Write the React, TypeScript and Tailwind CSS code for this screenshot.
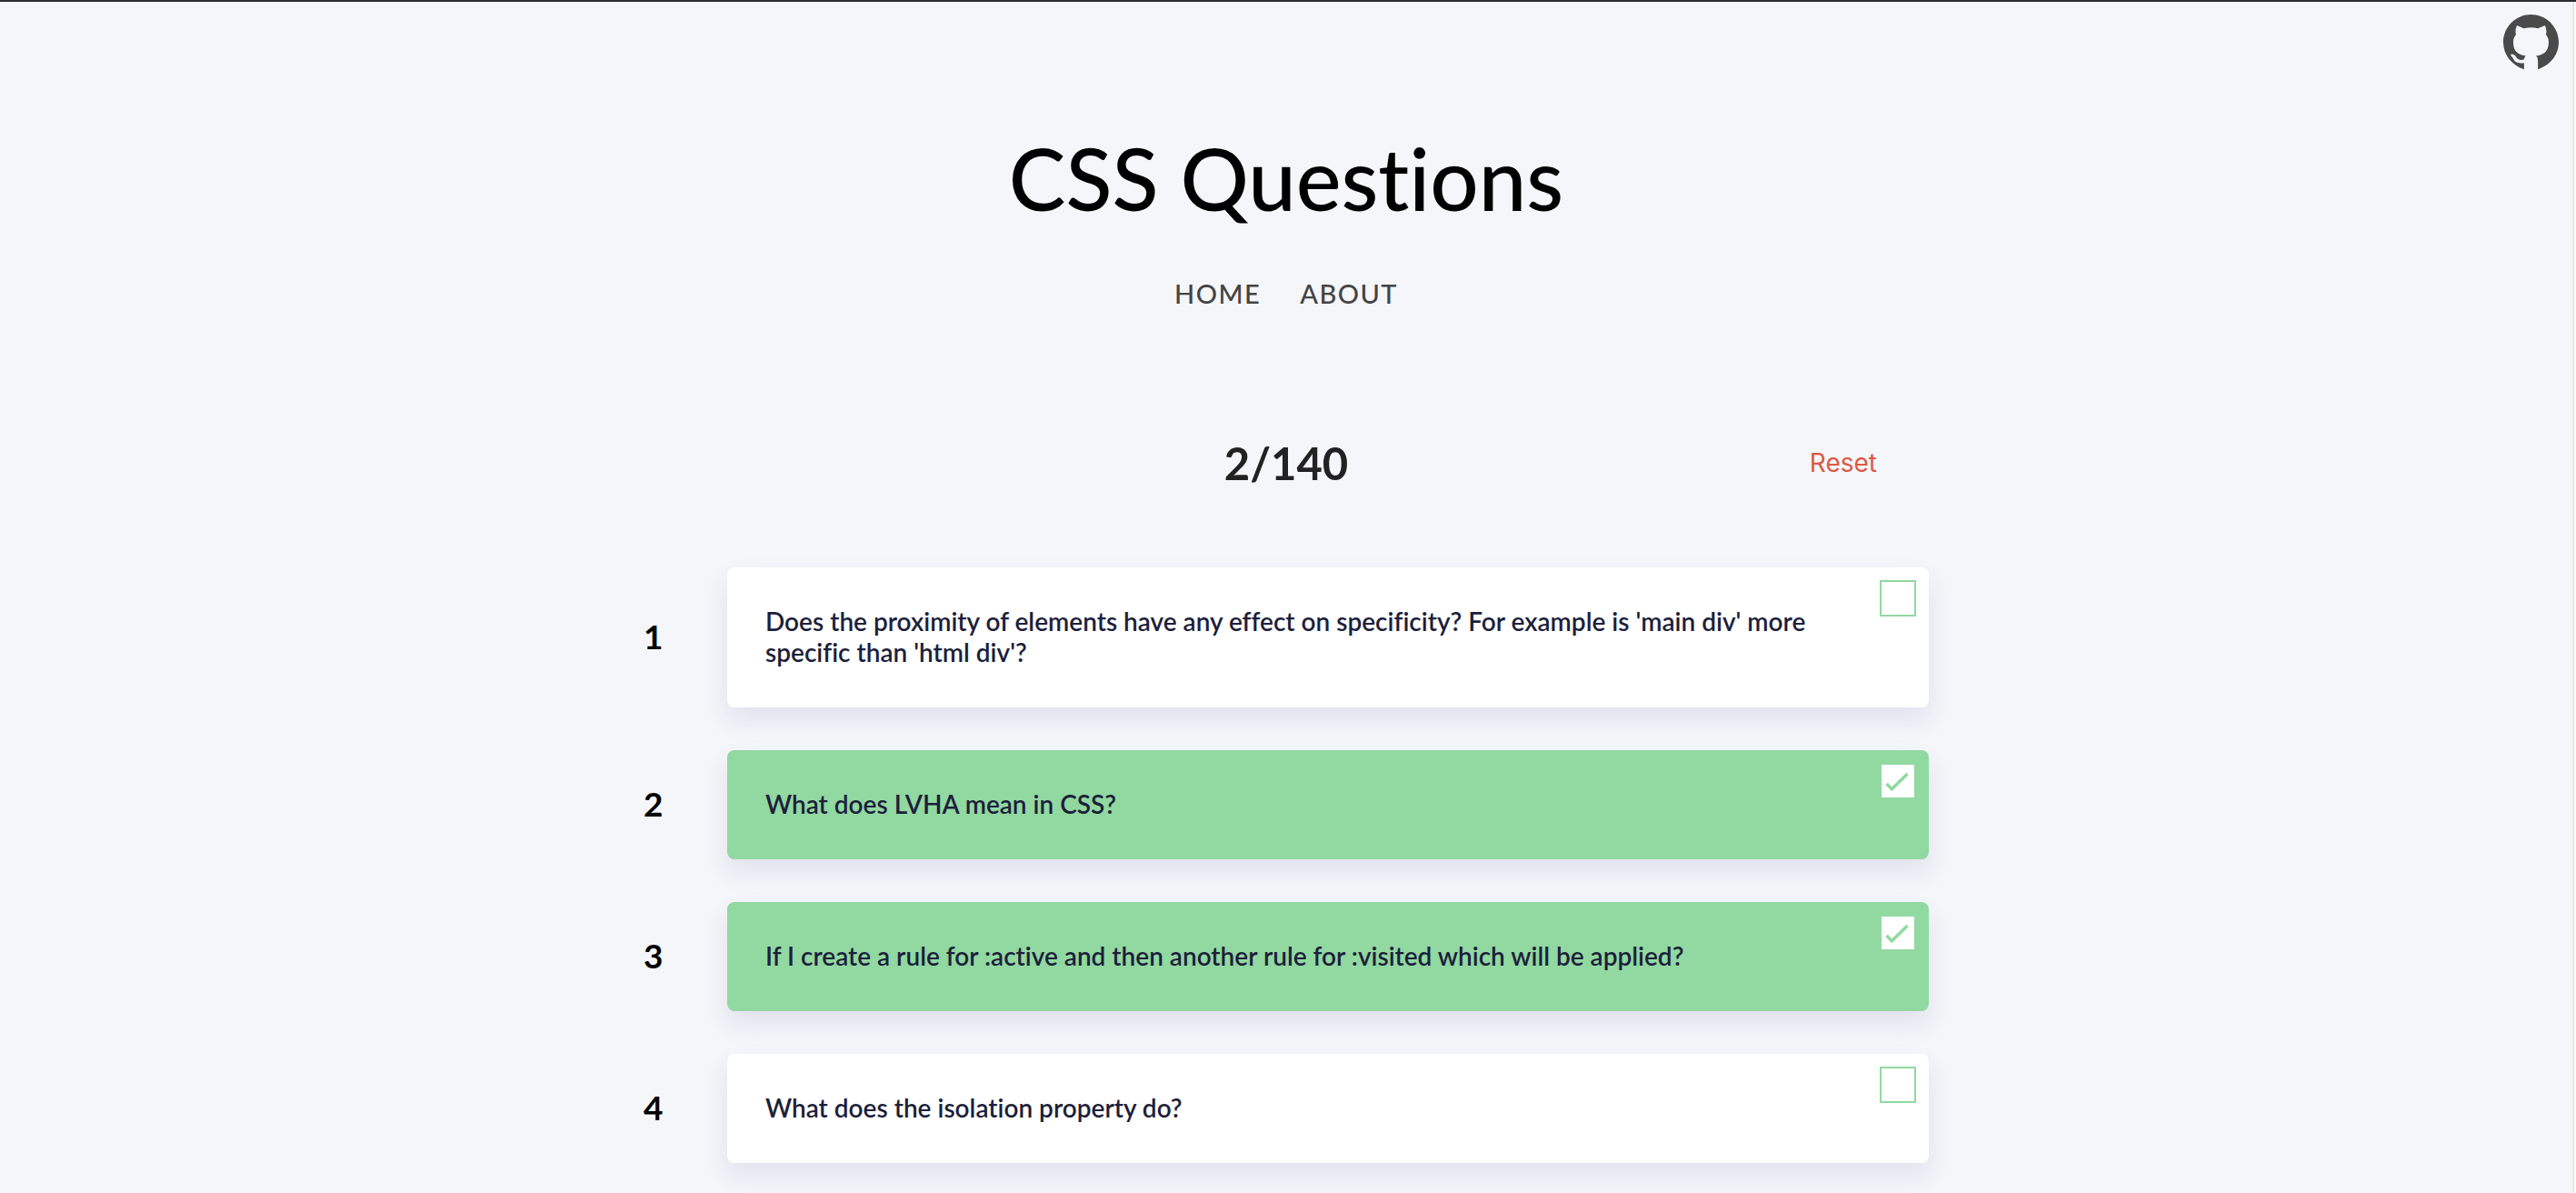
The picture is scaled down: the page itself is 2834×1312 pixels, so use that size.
import { useState } from "react";

type Question = { id: number; text: string; done: boolean };

const TOTAL = 140;

const initialQuestions: Question[] = [
  {
    id: 1,
    text: "Does the proximity of elements have any effect on specificity? For example is 'main div' more specific than 'html div'?",
    done: false,
  },
  { id: 2, text: "What does LVHA mean in CSS?", done: true },
  {
    id: 3,
    text: "If I create a rule for :active and then another rule for :visited which will be applied?",
    done: true,
  },
  { id: 4, text: "What does the isolation property do?", done: false },
];

function GithubMark() {
  return (
    <svg viewBox="0 0 16 16" className="size-[61px] fill-[#4a4a4a]" aria-hidden="true">
      <path d="M8 0C3.58 0 0 3.58 0 8c0 3.52 2.35 6.6 6 7.8V13.95c-1.85.25-2.6-.25-3-.95-.25-.5-.4-.85-.8-1.15-.1-.15-.05-.35.15-.4.75-.1 1.15.55 1.5 1 .55.7 1.3.75 2.15.5.07-.52.28-.87.51-1.07-1.78-.2-3.64-.89-3.64-3.95 0-.87.31-1.59.82-2.15-.08-.2-.36-1.02.08-2.12 0-.4.2-.5.5-.4l1.7.75c.64-.18 1.32-.27 2.03-.27s1.36.09 2 .27l1.7-.75c.3-.1.5 0 .5.4.44 1.1.16 1.92.08 2.12.51.56.82 1.27.82 2.15 0 3.07-1.87 3.75-3.65 3.95.35.35.54.8.54 1.5v2.4C13.65 14.6 16 11.52 16 8c0-4.42-3.58-8-8-8Z" />
    </svg>
  );
}

function QuestionRow({ question, onToggle }: { question: Question; onToggle: () => void }) {
  return (
    <li className="flex items-center">
      <span className="w-[92px] shrink-0 pb-1 text-[37px] leading-none font-bold text-black">{question.id}</span>
      <div
        className={`relative flex-1 rounded-lg pt-[42px] pr-[112px] pb-11 pl-[42px] shadow-[0_14px_28px_rgba(50,50,130,0.1)] ${
          question.done ? "bg-[#91d8a1]" : "bg-white"
        }`}
      >
        <label htmlFor={`question-${question.id}`} className="block text-[28px] leading-[34px] font-semibold text-[#1d1f3b]">
          {question.text}
        </label>
        <span className="absolute top-[14px] right-[14px] flex size-10">
          <input
            id={`question-${question.id}`}
            type="checkbox"
            checked={question.done}
            onChange={onToggle}
            className="size-10 cursor-pointer appearance-none border-2 border-[#91d8a1] bg-white"
          />
          {question.done && (
            <svg viewBox="0 0 40 40" className="pointer-events-none absolute inset-0 size-10" aria-hidden="true">
              <path d="M7.5 23 13.3 28.8 30.5 12" fill="none" stroke="#91d8a1" strokeWidth="3.4" />
            </svg>
          )}
        </span>
      </div>
    </li>
  );
}

export default function App() {
  const [questions, setQuestions] = useState(initialQuestions);
  const doneCount = questions.filter((q) => q.done).length;
  const toggle = (id: number) =>
    setQuestions((list) => list.map((q) => (q.id === id ? { ...q, done: !q.done } : q)));
  const reset = () => setQuestions((list) => list.map((q) => ({ ...q, done: false })));

  return (
    <div className="flex h-screen overflow-hidden border-t-2 border-[#2b2b30] bg-[#f5f6fa] font-['Lato',sans-serif] [font-variant-ligatures:none]">
      <div className="relative flex-1">
        <a href="https://github.com" aria-label="GitHub" className="absolute top-[14px] right-[15px]">
          <GithubMark />
        </a>
        <header className="flex flex-col items-center pt-[140px]">
          <h1 className="text-[94px] leading-[108px] font-medium text-black">CSS Questions</h1>
          <nav className="mt-[55px] flex gap-[43px] text-[29px] leading-9 font-medium tracking-wider text-[#444] uppercase">
            <a href="#home">Home</a>
            <a href="#about">About</a>
          </nav>
        </header>
        <main className="mx-auto w-full max-w-[1414px]">
          <div className="mt-[136px] grid grid-cols-3 items-center">
            <p className="col-start-2 text-center text-[49px] leading-[64px] font-bold text-[#222]">
              {doneCount}/{TOTAL}
            </p>
            <button type="button" onClick={reset} className="mr-[57px] cursor-pointer justify-self-end font-['Inter',sans-serif] text-[28px] leading-9 text-[#dc5846]">
              Reset
            </button>
          </div>
          <ul className="mt-[83px] flex flex-col gap-[47px]">
            {questions.map((q) => (
              <QuestionRow key={q.id} question={q} onToggle={() => toggle(q.id)} />
            ))}
          </ul>
        </main>
      </div>
      <div className="w-1 shrink-0 border-l-2 border-[#e8e8e8] bg-[#fafafa]" />
    </div>
  );
}
